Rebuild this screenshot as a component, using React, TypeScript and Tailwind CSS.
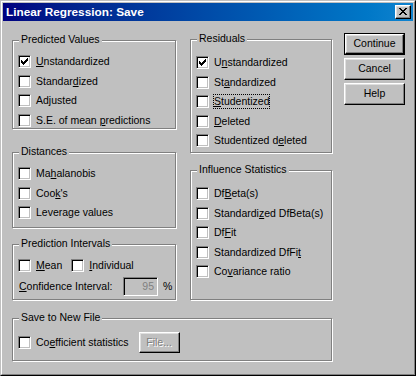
import type { ReactNode } from "react";

// classic Win98 dialog, "Linear Regression: Save"

function Mn({ text, u }: { text: string; u?: number }) {
  if (u === undefined) return <>{text}</>;
  return (
    <>
      {text.slice(0, u)}
      <span className="underline decoration-1 underline-offset-[1px]">{text[u]}</span>
      {text.slice(u + 1)}
    </>
  );
}

function Box({ checked }: { checked?: boolean }) {
  return (
    <span className="flex h-[13px] w-[13px] shrink-0 border border-t-[#808080] border-l-[#808080] border-b-white border-r-white bg-white shadow-[inset_1px_1px_0_#000,inset_-1px_-1px_0_#c0c0c0]">
      {checked && (
        <svg className="ml-[2px] mt-[2px]" width="7" height="7" viewBox="0 0 7 7" shapeRendering="crispEdges">
          <path
            fill="#000"
            d="M6 0h1v1h-1z M5 1h2v1h-2z M0 2h1v1h-1z M4 2h3v1h-3z M0 3h2v1h-2z M3 3h3v1h-3z M0 4h5v1h-5z M1 5h3v1h-3z M2 6h1v1h-1z"
          />
        </svg>
      )}
    </span>
  );
}

function Check({
  label,
  u,
  checked,
  focus,
  className = "",
}: {
  label: string;
  u?: number;
  checked?: boolean;
  focus?: boolean;
  className?: string;
}) {
  return (
    <div className={`flex h-[13px] items-center ${className}`}>
      <Box checked={checked} />
      <span
        className={`ml-[5px] whitespace-nowrap leading-[13px] ${
          focus ? "outline outline-1 outline-dotted outline-black" : ""
        }`}
      >
        <Mn text={label} u={u} />
      </span>
    </div>
  );
}

function Group({
  label,
  className,
  children,
}: {
  label: string;
  className: string;
  children: ReactNode;
}) {
  return (
    <div
      className={`relative border border-[#808080] shadow-[inset_1px_1px_0_#fff,1px_1px_0_#fff] ${className}`}
    >
      <span className="absolute left-[6px] -top-[8px] bg-[#c0c0c0] px-[2px] leading-[12px] whitespace-nowrap">
        {label}
      </span>
      {children}
    </div>
  );
}

function Button({ label, isDefault }: { label: string; isDefault?: boolean }) {
  const face = (
    <div className="flex h-full w-full items-center justify-center border border-t-white border-l-white border-b-black border-r-black bg-[#c0c0c0] shadow-[inset_-1px_-1px_0_#808080,inset_1px_1px_0_#dfdfdf]">
      {label}
    </div>
  );
  if (isDefault) {
    return <div className="h-[22px] w-[61px] border border-black">{face}</div>;
  }
  return <div className="h-[22px] w-[61px]">{face}</div>;
}

export default function App() {
  return (
    <div className="h-[376px] w-[416px] border border-t-[#c0c0c0] border-l-[#c0c0c0] border-b-black border-r-black font-['Liberation_Sans',Arial,sans-serif] text-[10.5px] text-black">
      <div className="flex h-full flex-col border border-t-white border-l-white border-b-[#808080] border-r-[#808080] bg-[#c0c0c0] p-[1px]">
        {/* title bar */}
        <div className="flex h-[18px] shrink-0 items-center bg-gradient-to-r from-[#000080] to-[#1084d0] pl-[3px]">
          <span className="text-[11.8px] font-bold leading-[14px] text-white">
            Linear Regression: Save
          </span>
          <div className="ml-auto mr-[2px] flex h-[14px] w-[16px] border border-t-white border-l-white border-b-black border-r-black bg-[#c0c0c0] shadow-[inset_-1px_-1px_0_#808080,inset_1px_1px_0_#dfdfdf]">
            <svg className="ml-[3px] mt-[2px]" width="8" height="7" viewBox="0 0 8 7" shapeRendering="crispEdges">
              <path
                fill="#000"
                d="M0 0h2v1h-2z M6 0h2v1h-2z M1 1h2v1h-2z M5 1h2v1h-2z M2 2h4v1h-4z M3 3h2v1h-2z M2 4h4v1h-4z M1 5h2v1h-2z M5 5h2v1h-2z M0 6h2v1h-2z M6 6h2v1h-2z"
              />
            </svg>
          </div>
        </div>

        {/* body */}
        <div className="flex flex-col pl-[9px]">
          <div className="flex items-start">
            <div className="flex w-[164px] flex-col">
              <Group label="Predicted Values" className="mt-[19px] h-[89px]">
                <div className="flex flex-col gap-[6.5px] pl-[5px] pt-[14px]">
                  <Check label="Unstandardized" u={0} checked />
                  <Check label="Standardized" u={7} />
                  <Check label="Adjusted" />
                  <Check label="S.E. of mean predictions" u={13} />
                </div>
              </Group>
              <Group label="Distances" className="mt-[23px] h-[76px]">
                <div className="flex flex-col gap-[6.5px] pl-[5px] pt-[14px]">
                  <Check label="Mahalanobis" u={2} />
                  <Check label="Cook's" u={3} />
                  <Check label="Leverage values" />
                </div>
              </Group>
              <Group label="Prediction Intervals" className="mt-[16px] h-[56px]">
                <div className="flex flex-col pl-[5px] pt-[14px]">
                  <div className="flex">
                    <Check label="Mean" u={0} />
                    <Check label="Individual" u={0} className="ml-[9px]" />
                  </div>
                  <div className="mt-[5px] flex h-[19px] items-center">
                    <span className="w-[105px] pl-[1px] leading-[13px]">
                      <Mn text="Confidence Interval:" u={0} />
                    </span>
                    <div className="flex h-[19px] w-[35px] items-center justify-end border border-t-[#808080] border-l-[#808080] border-b-white border-r-white bg-[#c0c0c0] pr-[3px] text-[#808080] shadow-[inset_1px_1px_0_#000,inset_-1px_-1px_0_#c0c0c0]">
                      95
                    </div>
                    <span className="ml-[5px]">%</span>
                  </div>
                </div>
              </Group>
            </div>

            <div className="ml-[14px] flex w-[142px] flex-col">
              <Group label="Residuals" className="mt-[18px] h-[114px]">
                <div className="flex flex-col gap-[6.5px] pl-[5px] pt-[16px]">
                  <Check label="Unstandardized" u={1} checked />
                  <Check label="Standardized" u={2} />
                  <Check label="Studentized" u={0} focus />
                  <Check label="Deleted" u={0} />
                  <Check label="Studentized deleted" u={13} />
                </div>
              </Group>
              <Group label="Influence Statistics" className="mt-[17px] h-[130px]">
                <div className="flex flex-col gap-[6.5px] pl-[5px] pt-[16px]">
                  <Check label="DfBeta(s)" u={2} />
                  <Check label="Standardized DfBeta(s)" u={9} />
                  <Check label="DfFit" u={2} />
                  <Check label="Standardized DfFit" u={17} />
                  <Check label="Covariance ratio" u={2} />
                </div>
              </Group>
            </div>

            <div className="ml-[12px] mt-[12px] flex flex-col gap-[3px]">
              <Button label="Continue" isDefault />
              <Button label="Cancel" />
              <Button label="Help" />
            </div>
          </div>

          <Group label="Save to New File" className="mt-[18px] h-[43px] w-[320px]">
            <div className="flex items-center pl-[5px] pt-[13px]">
              <Check label="Coefficient statistics" u={2} />
              <div className="ml-[10px] flex h-[21px] w-[41px] items-center justify-center border border-t-white border-l-white border-b-black border-r-black text-[#808080] shadow-[inset_-1px_-1px_0_#808080,inset_1px_1px_0_#dfdfdf] [text-shadow:1px_1px_0_#fff]">
                File...
              </div>
            </div>
          </Group>
        </div>
      </div>
    </div>
  );
}
